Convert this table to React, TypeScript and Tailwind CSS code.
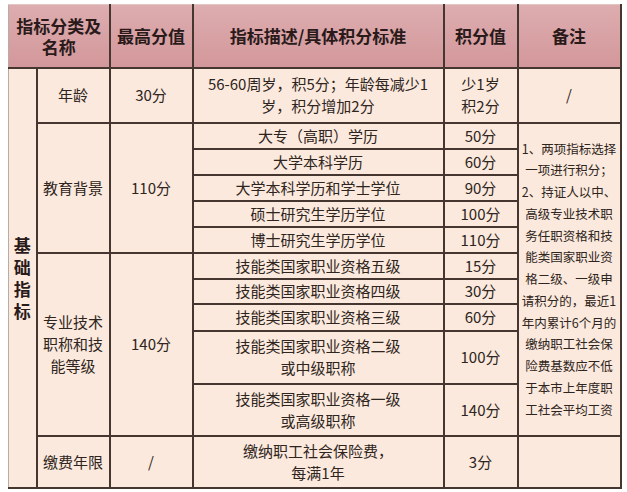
import React from "react";

const cell = "border-2 border-[#45372f] text-center align-middle p-0";
const leftEdge = "border-l border-l-[#b9aba6]";

const remarks = [
  "1、两项指标选择",
  "一项进行积分；",
  "2、持证人以中、",
  "高级专业技术职",
  "务任职资格和技",
  "能类国家职业资",
  "格二级、一级申",
  "请积分的，最近1",
  "年内累计6个月的",
  "缴纳职工社会保",
  "险费基数应不低",
  "于本市上年度职",
  "工社会平均工资",
];

export default function App() {
  return (
    <div
      className="w-[627px] h-[492px] bg-white pt-[4px] pl-[8px] overflow-hidden"
      style={{ fontFamily: '"Noto Sans CJK SC", "Noto Sans", sans-serif' }}
    >
      <table className="table-fixed border-collapse w-[612px] text-[15px] leading-[22px] text-[#2e2420]">
        <colgroup>
          <col className="w-[28px]" />
          <col className="w-[73px]" />
          <col className="w-[83px]" />
          <col className="w-[251px]" />
          <col className="w-[74px]" />
          <col className="w-[103px]" />
        </colgroup>
        <thead>
          {/* header */}
          <tr className="h-[63px] bg-linear-to-b from-[#ddadaf] to-[#d3979b] text-[17px] font-bold text-[#2a1a1a] leading-[21px]">
            <th colSpan={2} className={`${cell} ${leftEdge} border-t border-t-[#e2c6c6]`}>
              指标分类及
              <br />
              名称
            </th>
            <th className={`${cell} border-t border-t-[#e2c6c6]`}>最高分值</th>
            <th className={`${cell} border-t border-t-[#e2c6c6]`}>指标描述/具体积分标准</th>
            <th className={`${cell} border-t border-t-[#e2c6c6]`}>积分值</th>
            <th className={`${cell} border-t border-t-[#e2c6c6]`}>备注</th>
          </tr>
        </thead>
        <tbody className="bg-[#fbe9dd]">
          {/* age */}
          <tr className="h-[55px]">
            <td rowSpan={12} className={`${cell} ${leftEdge} text-[17px] font-bold text-[#2a1a1a] leading-[22px]`}>
              基<br />础<br />指<br />标
            </td>
            <td className={cell}>年龄</td>
            <td className={cell}>30分</td>
            <td className={cell}>
              56-60周岁，积5分；年龄每减少1
              <br />
              岁，积分增加2分
            </td>
            <td className={cell}>
              少1岁
              <br />
              积2分
            </td>
            <td className={cell}>/</td>
          </tr>

          {/* education */}
          <tr className="h-[26px]">
            <td rowSpan={5} className={cell}>教育背景</td>
            <td rowSpan={5} className={cell}>110分</td>
            <td className={cell}>大专（高职）学历</td>
            <td className={cell}>50分</td>
            <td rowSpan={10} className={`${cell} text-[12.5px] leading-[21.75px]`}>
              {remarks.map((r) => (
                <div key={r} className="whitespace-nowrap">
                  {r}
                </div>
              ))}
            </td>
          </tr>
          <tr className="h-[26px]">
            <td className={cell}>大学本科学历</td>
            <td className={cell}>60分</td>
          </tr>
          <tr className="h-[26px]">
            <td className={cell}>大学本科学历和学士学位</td>
            <td className={cell}>90分</td>
          </tr>
          <tr className="h-[26px]">
            <td className={cell}>硕士研究生学历学位</td>
            <td className={cell}>100分</td>
          </tr>
          <tr className="h-[26px]">
            <td className={cell}>博士研究生学历学位</td>
            <td className={cell}>110分</td>
          </tr>

          {/* skills */}
          <tr className="h-[26px]">
            <td rowSpan={5} className={cell}>
              专业技术
              <br />
              职称和技
              <br />
              能等级
            </td>
            <td rowSpan={5} className={cell}>140分</td>
            <td className={cell}>技能类国家职业资格五级</td>
            <td className={cell}>15分</td>
          </tr>
          <tr className="h-[25px]">
            <td className={cell}>技能类国家职业资格四级</td>
            <td className={cell}>30分</td>
          </tr>
          <tr className="h-[27px]">
            <td className={cell}>技能类国家职业资格三级</td>
            <td className={cell}>60分</td>
          </tr>
          <tr className="h-[53px]">
            <td className={cell}>
              技能类国家职业资格二级
              <br />
              或中级职称
            </td>
            <td className={cell}>100分</td>
          </tr>
          <tr className="h-[52px]">
            <td className={cell}>
              技能类国家职业资格一级
              <br />
              或高级职称
            </td>
            <td className={cell}>140分</td>
          </tr>

          {/* payment */}
          <tr className="h-[52px]">
            <td className={cell}>缴费年限</td>
            <td className={cell}>/</td>
            <td className={cell}>
              缴纳职工社会保险费，
              <br />
              每满1年
            </td>
            <td className={cell}>3分</td>
            <td className={cell}></td>
          </tr>
        </tbody>
      </table>
    </div>
  );
}
